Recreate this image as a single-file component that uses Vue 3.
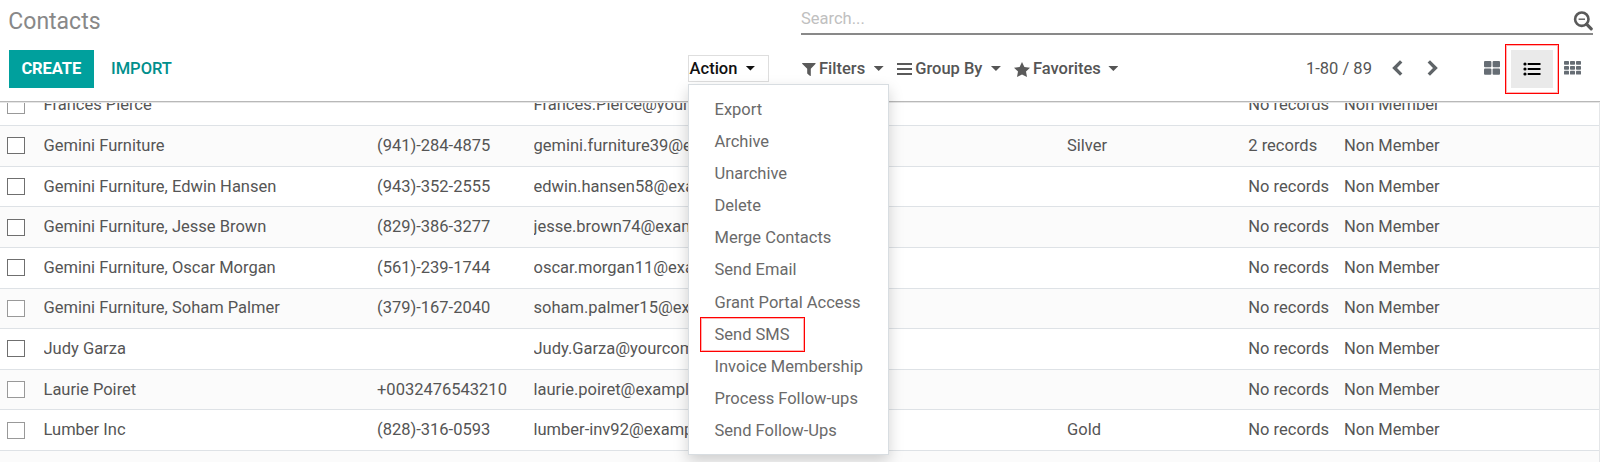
<script setup>
const rows = [
  { name: 'Frances Pierce', phone: '', email: 'Frances.Pierce@yourc', tag: '', rec: 'No records', dim: true },
  { name: 'Gemini Furniture', phone: '(941)-284-4875', email: 'gemini.furniture39@ex', tag: 'Silver', rec: '2 records' },
  { name: 'Gemini Furniture, Edwin Hansen', phone: '(943)-352-2555', email: 'edwin.hansen58@exa', tag: '', rec: 'No records' },
  { name: 'Gemini Furniture, Jesse Brown', phone: '(829)-386-3277', email: 'jesse.brown74@exam', tag: '', rec: 'No records' },
  { name: 'Gemini Furniture, Oscar Morgan', phone: '(561)-239-1744', email: 'oscar.morgan11@exa', tag: '', rec: 'No records' },
  { name: 'Gemini Furniture, Soham Palmer', phone: '(379)-167-2040', email: 'soham.palmer15@exa', tag: '', rec: 'No records', dim: true },
  { name: 'Judy Garza', phone: '', email: 'Judy.Garza@yourcom', tag: '', rec: 'No records' },
  { name: 'Laurie Poiret', phone: '+0032476543210', email: 'laurie.poiret@example', tag: '', rec: 'No records', dim: true },
  { name: 'Lumber Inc', phone: '(828)-316-0593', email: 'lumber-inv92@examp', tag: 'Gold', rec: 'No records', dim: true },
]
const actions = ['Export', 'Archive', 'Unarchive', 'Delete', 'Merge Contacts', 'Send Email', 'Grant Portal Access', 'Send SMS', 'Invoice Membership', 'Process Follow-ups', 'Send Follow-Ups']
</script>

<template>
  <div class="page">
    <header class="panel">
      <div class="top">
        <h1>Contacts</h1>
        <div class="search">
          <span>Search...</span>
          <svg class="mag" width="20" height="20" viewBox="0 0 20 20" fill="none" stroke="#5a5a5a">
            <circle cx="8.8" cy="8.2" r="6.7" stroke-width="2.6" />
            <path d="M13.6 13.2L18.2 17.8" stroke-width="3.2" stroke-linecap="round" />
            <path d="M5.6 8.2H12" stroke-width="1.4" />
          </svg>
        </div>
      </div>
      <div class="bar">
        <button class="create">CREATE</button>
        <button class="import">IMPORT</button>
        <div class="action">
          <button class="toggle"><span>Action</span><i class="caret"></i></button>
          <ul class="menu">
            <li v-for="a in actions" :key="a"><span :class="{ marked: a === 'Send SMS' }">{{ a }}</span></li>
          </ul>
        </div>
        <div class="filters">
          <button class="filter">
            <svg width="14" height="13" viewBox="0 0 14 13"><path d="M.4 0H13.2Q14 .4 13.4 1L8.8 5.8V12.4Q8.5 13.2 7.8 12.8L5.2 10.6V5.8L.4 1Q-.2 .3 .4 0Z" fill="#5a5a5a" /></svg>
            <span>Filters</span><i class="caret"></i>
          </button>
          <button class="filter group">
            <svg width="15" height="12" viewBox="0 0 15 12"><path d="M0 1H15M0 6H15M0 11H15" stroke="#5a5a5a" stroke-width="2" /></svg>
            <span>Group By</span><i class="caret"></i>
          </button>
          <button class="filter fav">
            <svg width="16" height="15" viewBox="0 0 16 15"><path d="M8 0L10.4 5L16 5.7L12 9.5L13 15L8 12.4L3 15L4 9.5L0 5.7L5.6 5Z" fill="#5a5a5a" /></svg>
            <span>Favorites</span><i class="caret"></i>
          </button>
        </div>
        <div class="pager">
          <span>1-80 / 89</span>
          <svg class="prev" width="11" height="16" viewBox="0 0 11 16" fill="none" stroke="#5f6468" stroke-width="3.4"><path d="M9.2 1.4L2.6 8L9.2 14.6" /></svg>
          <svg class="next" width="11" height="16" viewBox="0 0 11 16" fill="none" stroke="#5f6468" stroke-width="3.4"><path d="M1.8 1.4L8.4 8L1.8 14.6" /></svg>
        </div>
        <div class="views">
          <svg class="kanban" width="16" height="14" viewBox="0 0 16 14" fill="#666d74">
            <rect width="7.4" height="6.3" rx="1" /><rect x="8.6" width="7.4" height="6.3" rx="1" />
            <rect y="7.5" width="7.4" height="6.3" rx="1" /><rect x="8.6" y="7.5" width="7.4" height="6.3" rx="1" />
          </svg>
          <div class="current">
            <svg width="18" height="14" viewBox="0 0 18 14">
              <path d="M4.7 2H17.5M4.7 7H17.5M4.7 12H17.5" stroke="#000" stroke-width="2.1" />
              <circle cx="2" cy="2" r="1.6" /><circle cx="2" cy="7" r="1.6" /><circle cx="2" cy="12" r="1.6" />
            </svg>
          </div>
          <svg class="grid" width="17" height="14" viewBox="0 0 17 14" fill="#666d74">
            <template v-for="r in 3" :key="r">
              <rect v-for="c in 3" :key="c" :x="(c - 1) * 6" :y="(r - 1) * 4.9" width="5" height="3.8" rx=".7" />
            </template>
          </svg>
        </div>
      </div>
    </header>
    <main class="list">
      <div v-for="r in rows" :key="r.name" class="row">
        <span><i class="box" :class="{ dim: r.dim }"></i></span>
        <span>{{ r.name }}</span>
        <span>{{ r.phone }}</span>
        <span class="email">{{ r.email }}</span>
        <span>{{ r.tag }}</span>
        <span>{{ r.rec }}</span>
        <span>Non Member</span>
      </div>
      <div class="row"></div>
    </main>
  </div>
</template>

<style>
body { margin: 0; overflow: hidden; }
</style>

<style scoped>
*, *::after { box-sizing: border-box; }
.page { width: 1600px; height: 462px; overflow: hidden; background: #fff; color: #555; font: 16.5px/20px Roboto, sans-serif; display: flex; flex-direction: column; }
.panel { position: relative; z-index: 2; flex: none; height: 102px; background: #fff; border-bottom: 1px solid #b8b8b8; box-shadow: 0 1px 0 #e6e6e6; }
.top { display: flex; height: 42px; }
h1 { width: 801px; margin: 0; padding: 8px 0 0 8.3px; font-size: 23px; line-height: 27px; font-weight: 400; color: #888; }
.search { width: 792px; height: 35px; border-bottom: 2px solid #898989; display: flex; justify-content: space-between; padding-top: 9px; color: #c0c0c0; }
.mag { margin: 2px 0 0 0; }
.bar { display: flex; height: 59px; align-items: flex-start; padding-left: 8.5px; }
button { border: 0; background: none; padding: 0; margin: 0; font: inherit; color: inherit; white-space: nowrap; text-align: left; }
.create { width: 85.5px; height: 38px; margin-top: 8px; background: #00a09d; color: #fff; font-weight: 700; text-align: center; letter-spacing: -.1px; }
.import { width: 64px; height: 38px; margin: 8px 0 0 17px; color: #008f8c; font-weight: 500; }
.action { position: relative; width: 81px; height: 27px; margin: 13px 0 0 513px; }
.toggle { display: flex; align-items: center; width: 81px; height: 27px; border: 1px solid #dedede; color: #111; font-weight: 500; padding-left: .6px; }
.caret { display: block; width: 10px; height: 5px; background: currentColor; clip-path: polygon(0 0, 100% 0, 50% 100%); margin-top: -1px; }
.toggle .caret { margin-left: 8px; }
.menu { position: absolute; left: 0; top: 29px; width: 201px; height: 371px; margin: 0; padding: 8.5px 0 0 25.5px; list-style: none; background: #fff; border: 1px solid #d8dde1; box-shadow: 0 6px 14px rgba(0, 0, 0, .18); color: #6a6a6a; }
.menu li { height: 32.2px; line-height: 32.2px; white-space: nowrap; }
.marked { position: relative; }
.marked::after { content: ''; position: absolute; left: -14.5px; top: -8px; width: 105px; height: 35px; border: 1px solid #f00; box-shadow: inset 0 0 0 1px rgba(255, 0, 0, .3); }
.filters { display: flex; margin: 17px 0 0 33px; width: 504px; font-weight: 500; }
.filter { display: flex; align-items: center; height: 20px; }
.filter .caret { margin-left: 8.5px; }
.filter span { margin-left: 3px; }
.group { margin-left: 13.5px; }
.fav { margin-left: 13px; }
.filter.fav .caret { margin-left: 7.5px; }
.pager { display: flex; margin-top: 17px; width: 178px; }
.pager span { width: 86px; }
.prev, .next { margin-top: 1px; }
.next { margin-left: 24px; }
.views { display: flex; }
.kanban { margin-top: 19px; }
.current { position: relative; width: 42px; height: 38px; margin: 8px 11px 0 11px; background: #eaeaea; display: flex; align-items: center; justify-content: center; }
.current::after { content: ''; position: absolute; left: -6px; top: -6px; width: 54px; height: 50px; border: 1px solid #f00; box-shadow: inset 0 0 0 1px rgba(255, 0, 0, .3); }
.grid { margin-top: 19px; }
.list { margin-top: -16.5px; width: 1599.5px; border-right: 1px solid #e4e6e8; }
.row { display: grid; grid-template-columns: 43.5px 333.5px 156.5px 533.5px 181.3px 95.7px 1fr; height: 40.62px; align-items: center; border-bottom: 1px solid #dee2e6; white-space: nowrap; }
.row:nth-child(even) { background: #fbfbfb; }
.row span { overflow: hidden; }
.row .email { width: 155px; }
.box { display: block; width: 18px; height: 17px; margin-left: 7px; border: 1px solid #6f6f6f; background: #fff; }
.box.dim { border-color: #999; }
</style>
